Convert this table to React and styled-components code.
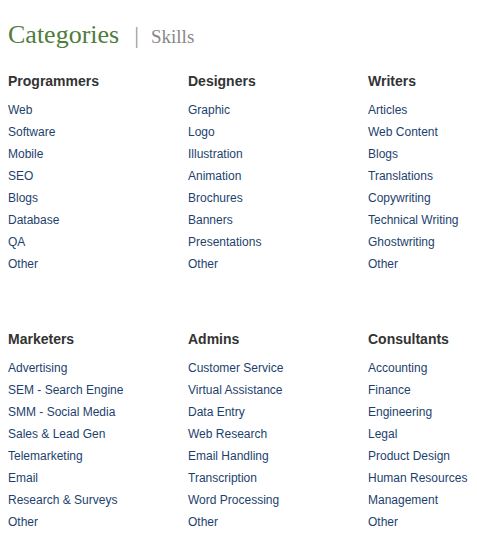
import React from 'react';
import styled, { createGlobalStyle } from 'styled-components';

const Global = createGlobalStyle`
	body {
		margin: 0;
		background: #fff;
		font-family: "Liberation Sans", Arial, sans-serif;
	}
`;

const Page = styled.div`
	padding: 20px 8px 0 8px;
`;

const Title = styled.div`
	display: flex;
	align-items: baseline;
	font-family: "Liberation Serif", Georgia, serif;
	height: 36px;
`;

const Active = styled.span`
	font-size: 26px;
	color: #4f7d3c;
`;

const Sep = styled.span`
	font-size: 24px;
	color: #999;
	margin: 0 12px 0 15px;
`;

const Tab = styled.span`
	font-size: 19px;
	color: #888;
`;

const Grid = styled.div`
	display: grid;
	grid-template-columns: 180px 180px 1fr;
	row-gap: 55px;
	margin-top: 16px;
`;

const Column = styled.div`
	display: flex;
	flex-direction: column;
	white-space: nowrap;
`;

const Heading = styled.h3`
	margin: 0 0 9px 0;
	font-size: 14px;
	font-weight: bold;
	color: #333;
	line-height: 18px;
`;

const Link = styled.a`
	font-size: 12px;
	line-height: 22px;
	color: #1d3f6e;
	text-decoration: none;
`;

const groups = [
	{ name: 'Programmers', items: ['Web', 'Software', 'Mobile', 'SEO', 'Blogs', 'Database', 'QA', 'Other'] },
	{ name: 'Designers', items: ['Graphic', 'Logo', 'Illustration', 'Animation', 'Brochures', 'Banners', 'Presentations', 'Other'] },
	{ name: 'Writers', items: ['Articles', 'Web Content', 'Blogs', 'Translations', 'Copywriting', 'Technical Writing', 'Ghostwriting', 'Other'] },
	{ name: 'Marketers', items: ['Advertising', 'SEM - Search Engine', 'SMM - Social Media', 'Sales & Lead Gen', 'Telemarketing', 'Email', 'Research & Surveys', 'Other'] },
	{ name: 'Admins', items: ['Customer Service', 'Virtual Assistance', 'Data Entry', 'Web Research', 'Email Handling', 'Transcription', 'Word Processing', 'Other'] },
	{ name: 'Consultants', items: ['Accounting', 'Finance', 'Engineering', 'Legal', 'Product Design', 'Human Resources', 'Management', 'Other'] },
];

export default () => (
	<Page>
		<Global />
		<Title>
			<Active>Categories</Active>
			<Sep>|</Sep>
			<Tab>Skills</Tab>
		</Title>
		<Grid>
			{groups.map(group => (
				<Column key={group.name}>
					<Heading>{group.name}</Heading>
					{group.items.map(item => (
						<Link key={item} href="#">
							{item}
						</Link>
					))}
				</Column>
			))}
		</Grid>
	</Page>
);
